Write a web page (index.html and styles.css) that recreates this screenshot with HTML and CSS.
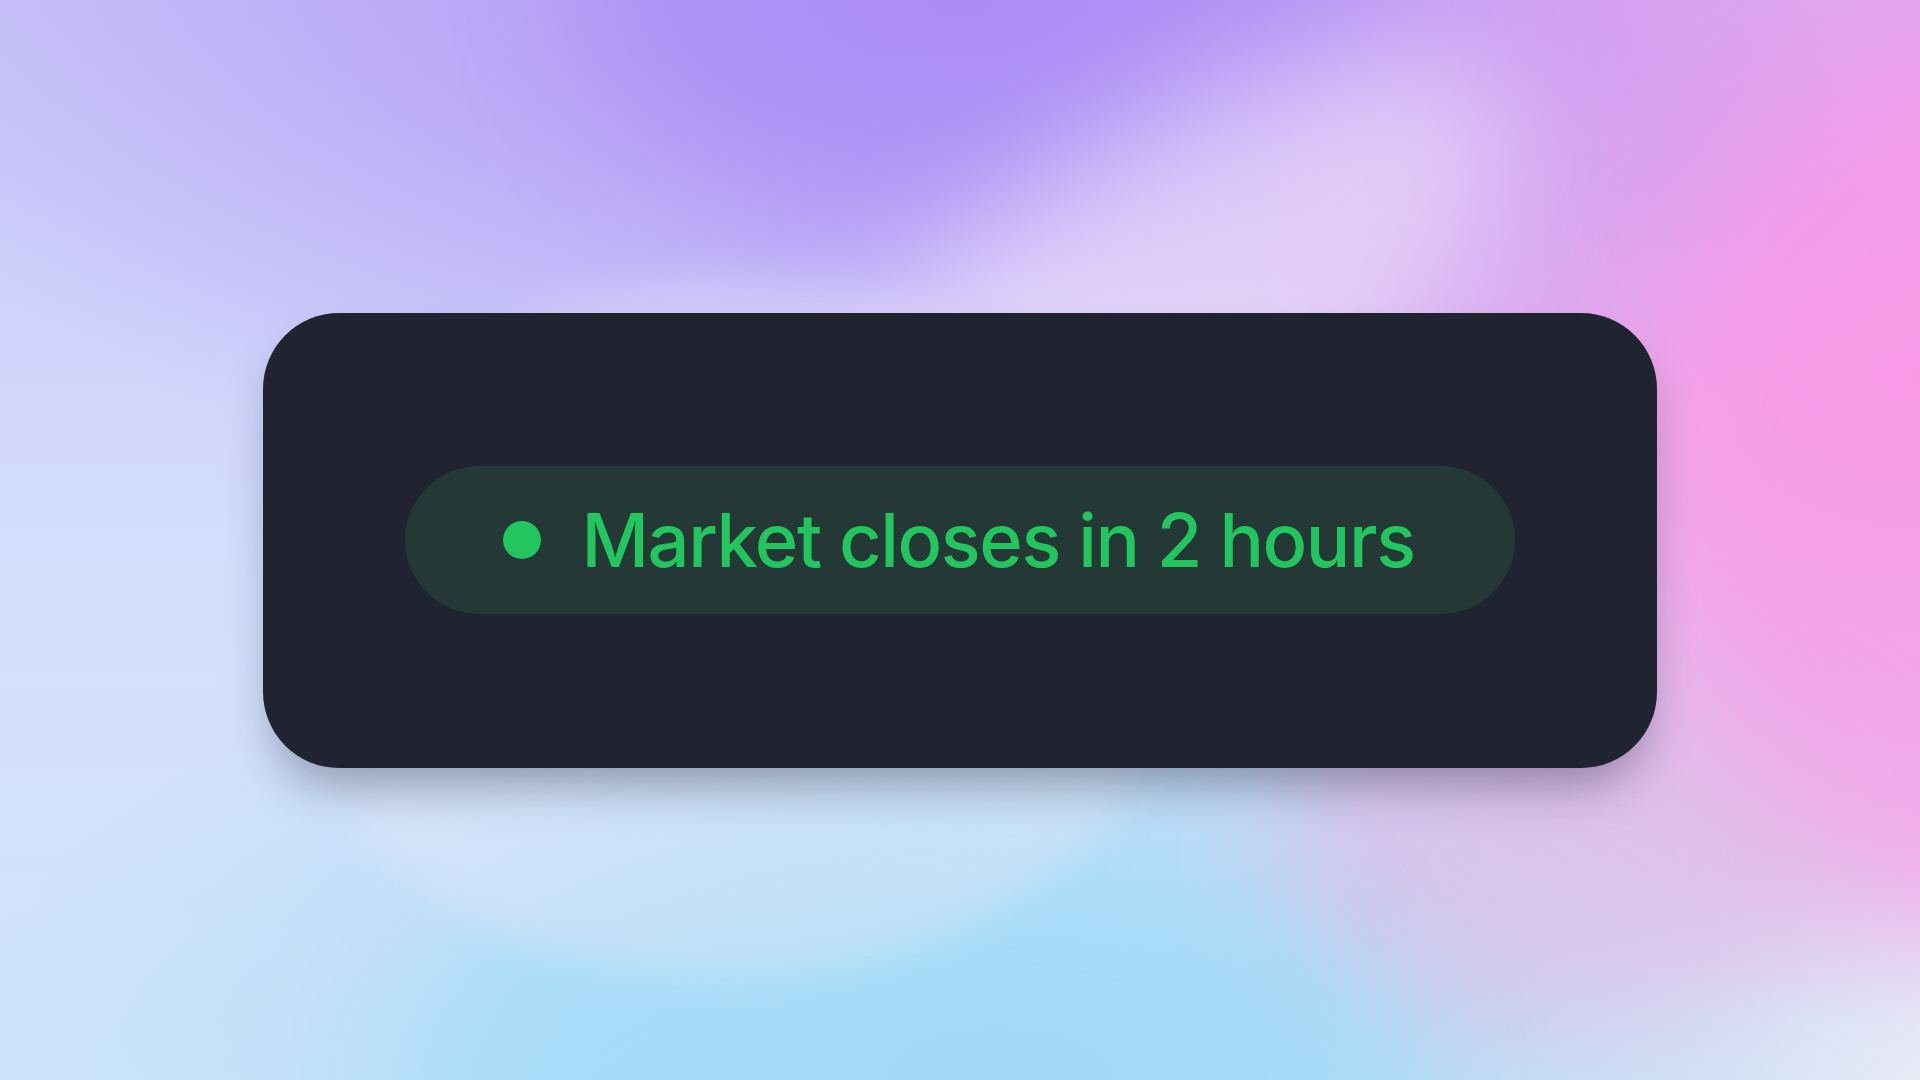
FILE: index.html
```html
<!DOCTYPE html>
<html lang="en">
<head>
  <meta charset="UTF-8" />
  <title>Market Status</title>
  <link rel="stylesheet" href="styles.css">
</head>
<body>

<!-- Soft colour backdrop -->
<div class="backdrop">
  <div class="blob blob-purple"></div>
  <div class="blob blob-pink"></div>
  <div class="blob blob-rose"></div>
  <div class="blob blob-blue"></div>
  <div class="blob blob-haze"></div>
  <div class="blob blob-ring"></div>
</div>

<!-- Status card -->
<main class="stage">
  <div class="card">
    <div class="status-pill">
      <span class="status-dot"></span>
      <span class="status-text">Market closes in 2 hours</span>
    </div>
  </div>
</main>

</body>
</html>
```

FILE: styles.css
```css
body {
  margin: 0;
  height: 100vh;
  overflow: hidden;
  font-family: 'Inter', 'Liberation Sans', sans-serif;
  background: #d6dcfb;
}

.backdrop {
  position: fixed;
  inset: 0;
  overflow: hidden;
  background:
    radial-gradient(ellipse 60% 50% at 50% 0%, #b092f6 0%, rgba(176,146,246,0) 100%),
    radial-gradient(ellipse 45% 60% at 100% 35%, #f79fe7 0%, rgba(247,159,231,0) 100%),
    radial-gradient(ellipse 40% 45% at 85% 0%, #f3b2f0 0%, rgba(243,178,240,0) 100%),
    radial-gradient(ellipse 55% 45% at 52% 100%, #a6dbf6 0%, rgba(166,219,246,0) 100%),
    radial-gradient(ellipse 35% 35% at 100% 100%, #f2ecf6 0%, rgba(242,236,246,0) 100%),
    linear-gradient(180deg, #c9c7f8 0%, #d5dffd 55%, #cfe4fb 100%);
}

.blob {
  position: absolute;
  border-radius: 50%;
  filter: blur(60px);
}

.blob-purple {
  width: 800px;
  height: 500px;
  left: 580px;
  top: -260px;
  background: rgba(168, 136, 245, 0.5);
}

.blob-pink {
  width: 700px;
  height: 900px;
  right: -420px;
  top: 40px;
  background: rgba(250, 150, 230, 0.6);
}

.blob-rose {
  width: 600px;
  height: 360px;
  left: 1260px;
  top: 680px;
  background: rgba(228, 180, 228, 0.55);
}

.blob-blue {
  width: 1000px;
  height: 500px;
  left: 420px;
  bottom: -260px;
  background: rgba(160, 218, 248, 0.65);
}

.blob-haze {
  width: 800px;
  height: 340px;
  left: 760px;
  top: 140px;
  transform: rotate(-32deg);
  background: rgba(242, 230, 250, 0.6);
}

.blob-ring {
  width: 900px;
  height: 700px;
  left: 280px;
  top: 280px;
  background: rgba(235, 236, 250, 0.35);
  filter: blur(20px);
}

.stage {
  position: relative;
  height: 100%;
  display: flex;
  align-items: center;
  justify-content: center;
}

.card {
  width: 1394px;
  height: 455px;
  background: #1f2430;
  border-radius: 76px;
  display: flex;
  align-items: center;
  justify-content: center;
  box-shadow: 0 28px 50px -14px rgba(20, 20, 40, 0.4);
}

.status-pill {
  height: 148px;
  padding: 0 100px 0 98px;
  display: flex;
  align-items: center;
  gap: 40px;
  background: #243835;
  border-radius: 999px;
}

.status-dot {
  width: 38px;
  height: 38px;
  border-radius: 50%;
  background: #22c55e;
}

.status-text {
  font-size: 74px;
  font-weight: 500;
  color: #22c55e;
  line-height: 1;
  letter-spacing: -1.4px;
}
```
